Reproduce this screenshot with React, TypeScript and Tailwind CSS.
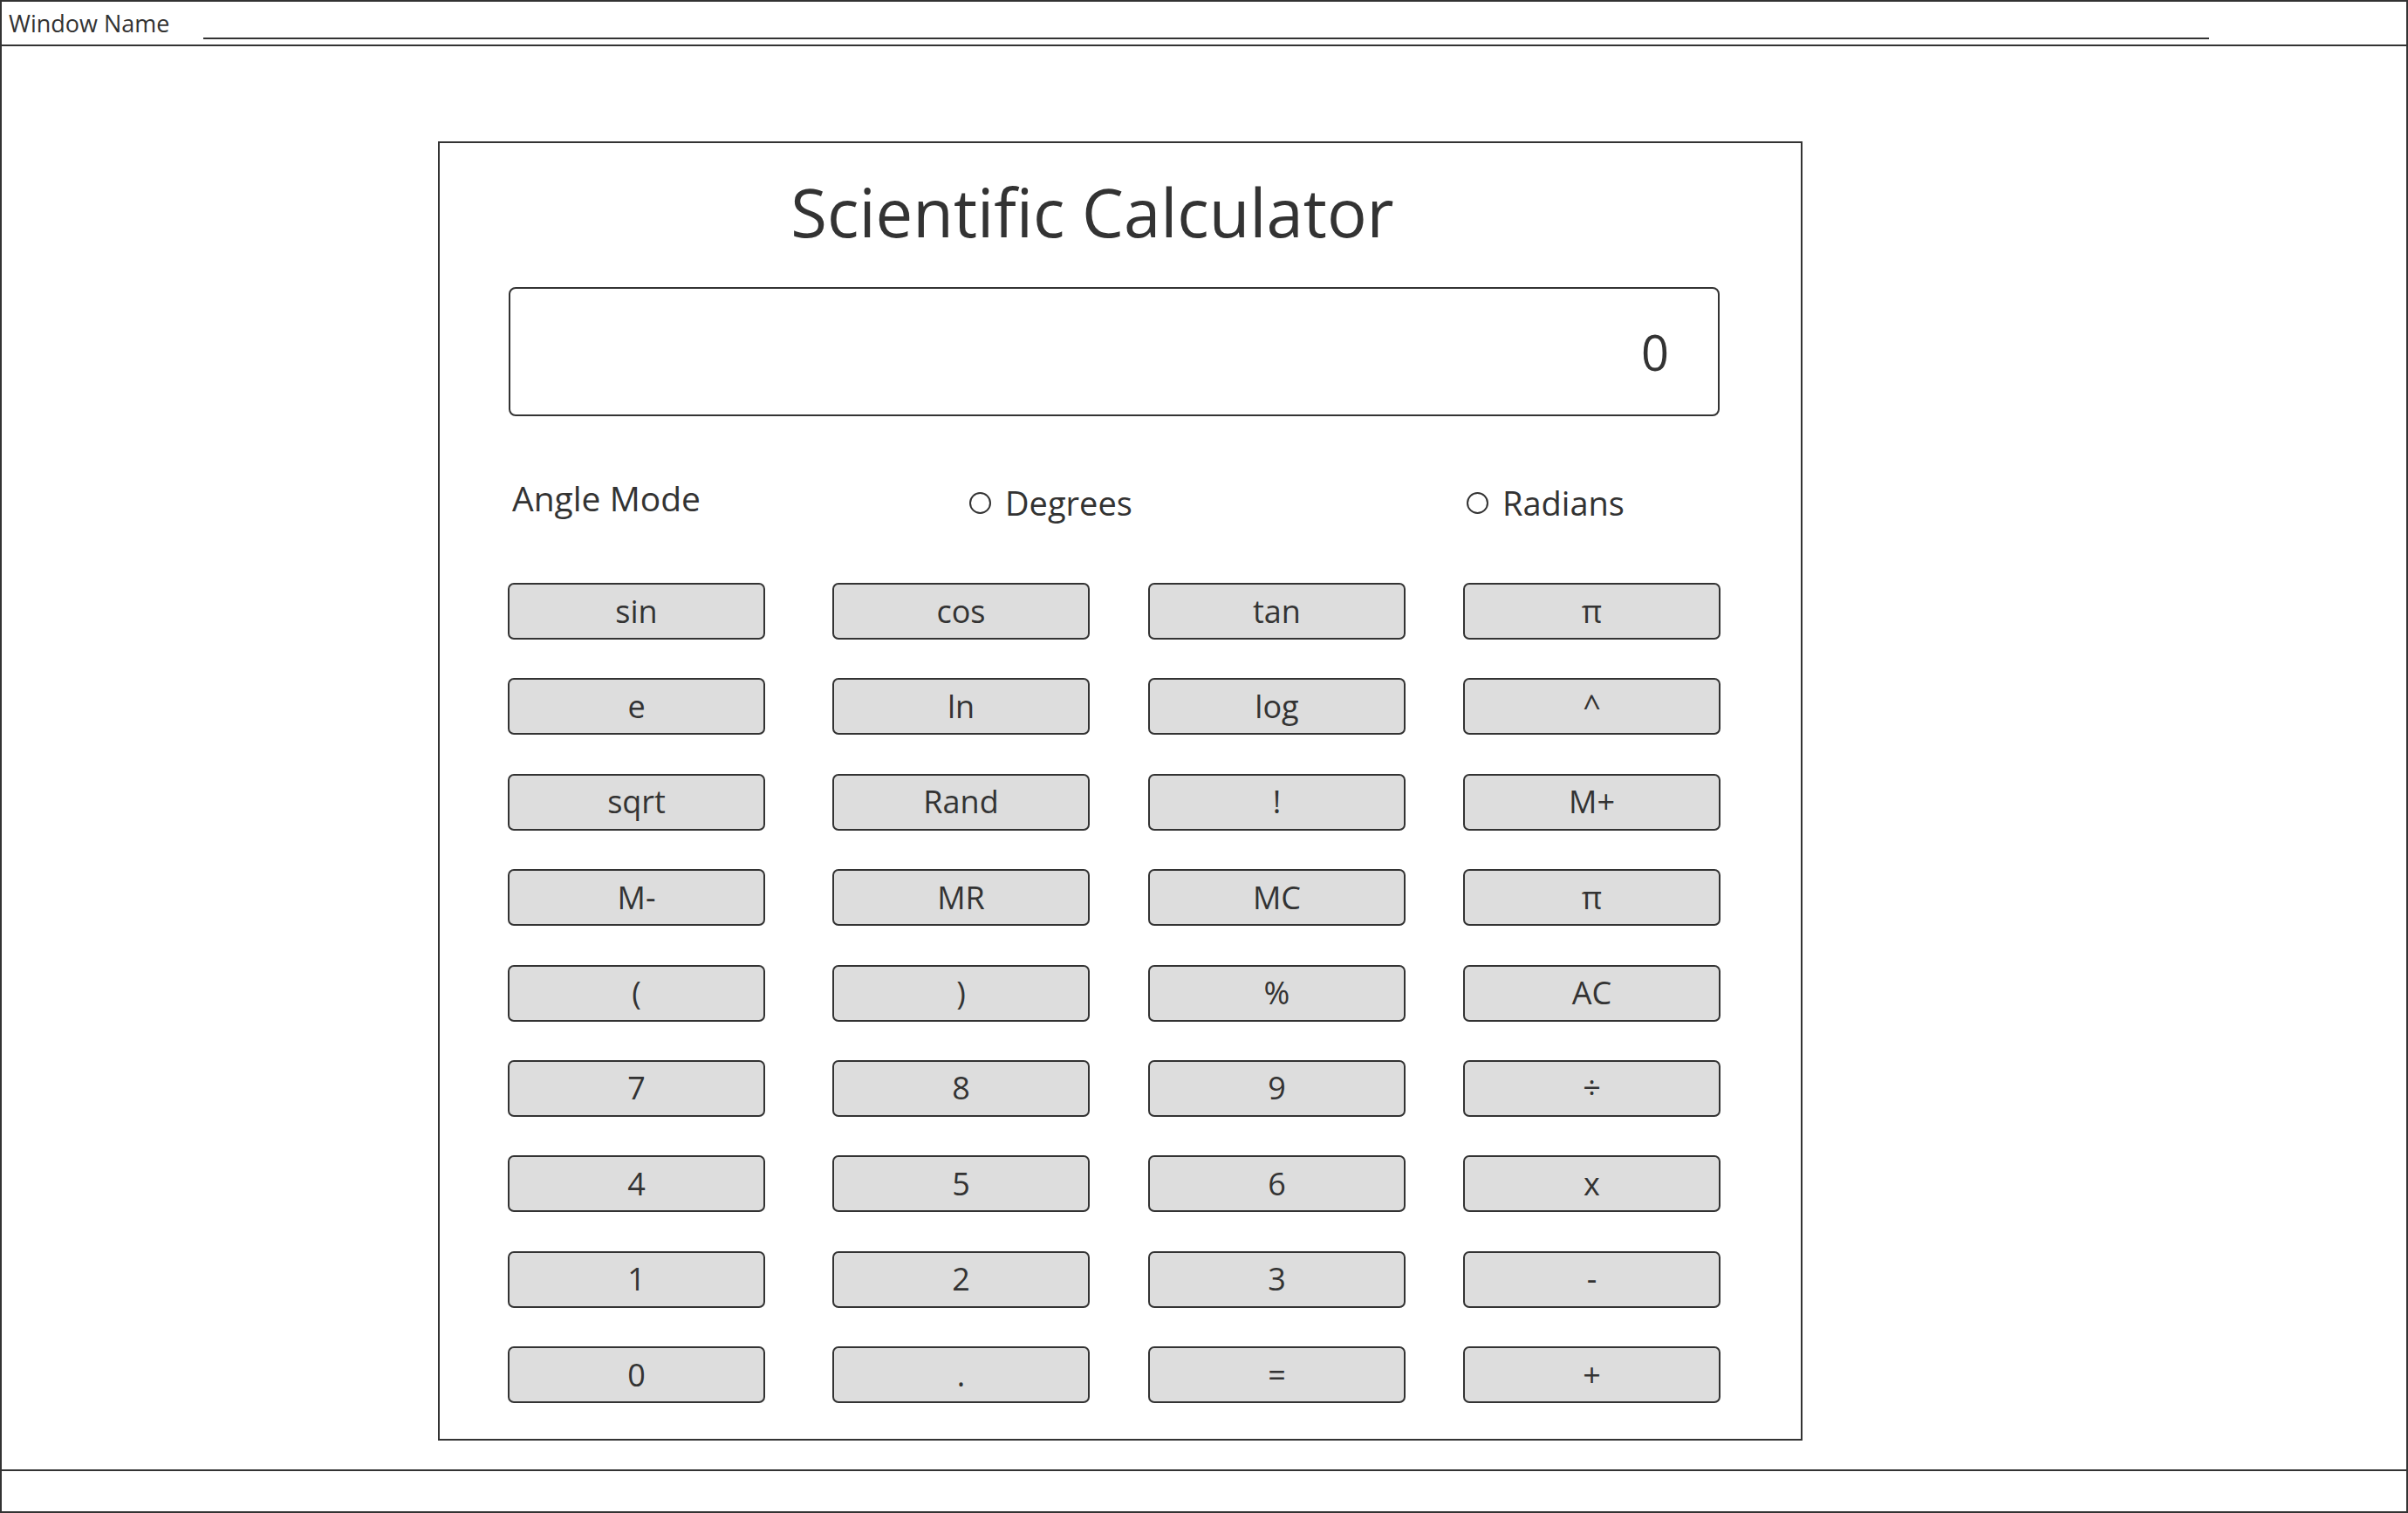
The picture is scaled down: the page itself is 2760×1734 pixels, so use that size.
import React from "react";

const rows: string[][] = [
  ["sin", "cos", "tan", "π"],
  ["e", "ln", "log", "^"],
  ["sqrt", "Rand", "!", "M+"],
  ["M-", "MR", "MC", "π"],
  ["(", ")", "%", "AC"],
  ["7", "8", "9", "÷"],
  ["4", "5", "6", "x"],
  ["1", "2", "3", "-"],
  ["0", ".", "=", "+"],
];

function Radio({ label }: { label: string }) {
  return (
    <div className="flex items-center gap-[16px]">
      <span className="w-[25px] h-[25px] rounded-full border-2 border-[#333] box-border" />
      <span className="text-[38px] text-[#333]">{label}</span>
    </div>
  );
}

function Key({ label }: { label: string }) {
  return (
    <button className="w-[295px] h-[65px] box-border rounded-[7px] border-2 border-[#333] bg-[#dddddd] text-[36px] leading-none text-[#333] flex items-center justify-center font-['Open_Sans',sans-serif]">
      {label}
    </button>
  );
}

export default function App() {
  return (
    <div className="w-[2760px] h-[1734px] box-border border-2 border-[#333] bg-white flex flex-col font-['Open_Sans',sans-serif] text-[#333]">
      {/* window title bar */}
      <div className="h-[51px] box-border border-b-2 border-[#333] flex items-center pl-[8px]">
        <span className="text-[27px] leading-none">Window Name</span>
        <div className="ml-[38px] self-end mb-[6px] w-[2299px] h-[2px] bg-[#333]" />
      </div>

      {/* content */}
      <div className="flex-1 pt-[109px] pl-[500px]">
        <div className="w-[1564px] h-[1489px] box-border border-2 border-[#333] flex flex-col">
          <div className="pt-[41px] pr-[64px] flex justify-center">
            <h1 className="text-[76px] leading-none font-normal">Scientific Calculator</h1>
          </div>

          <div className="mt-[48px] ml-[79px] w-[1388px] h-[148px] box-border border-2 border-[#333] rounded-[8px] flex items-center justify-end pr-[56px]">
            <span className="text-[56px] leading-none">0</span>
          </div>

          <div className="mt-[69px] ml-[79px] h-[60px] flex items-center">
            <div className="w-[528px] pl-[4px] mb-[10px] text-[39px]">Angle Mode</div>
            <div className="w-[570px]">
              <Radio label="Degrees" />
            </div>
            <Radio label="Radians" />
          </div>

          <div className="mt-[62px] ml-[78px] grid grid-cols-[372px_362px_361px_295px] gap-y-[44.4px]">
            {rows.map((row, r) =>
              row.map((k, c) => (
                <div key={`${r}-${c}`}>
                  <Key label={k} />
                </div>
              ))
            )}
          </div>
        </div>
      </div>

      {/* status bar */}
      <div className="h-[48px] box-border border-t-2 border-[#333]" />
    </div>
  );
}
